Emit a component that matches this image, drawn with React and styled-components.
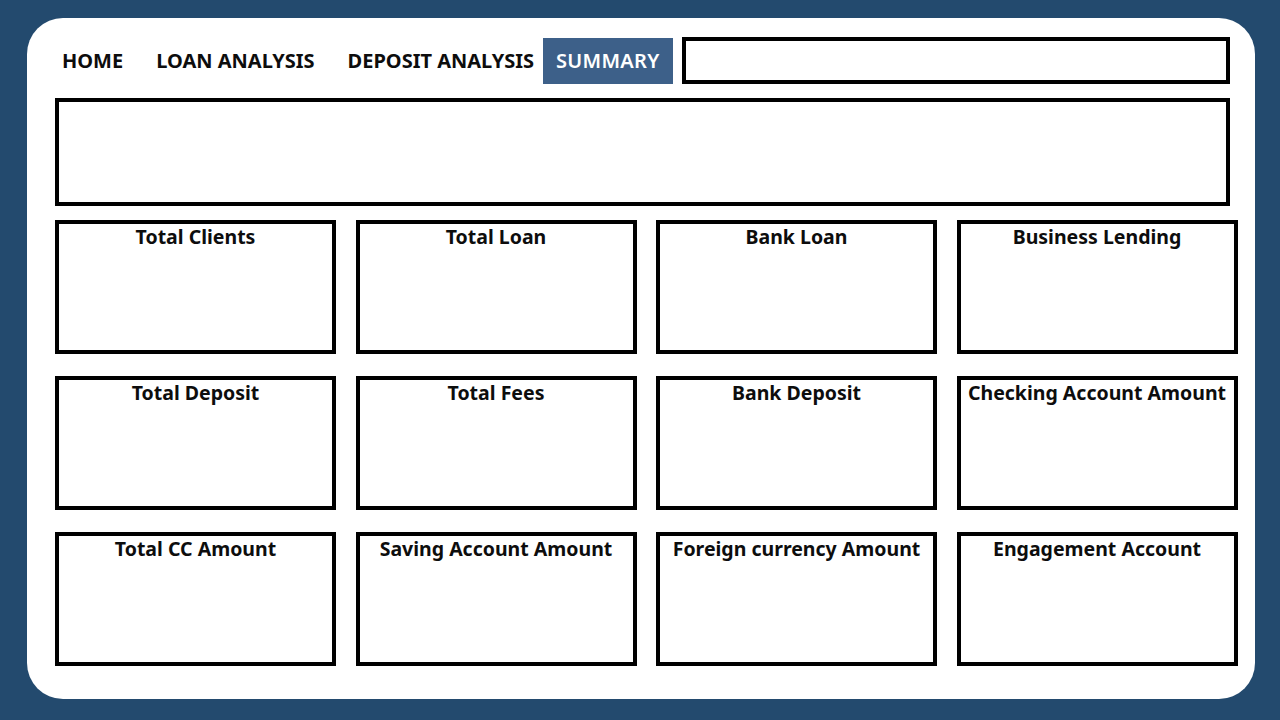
import React from "react";
import styled, { createGlobalStyle } from "styled-components";

const Global = createGlobalStyle`
  html, body {
    margin: 0;
    padding: 0;
    background: #234a6e;
    font-family: "Noto Sans", "Open Sans", "Liberation Sans", sans-serif;
  }
`;

const Page = styled.div`
  width: 1280px;
  height: 720px;
  box-sizing: border-box;
  padding: 18px 25px 21px 27px;
  background: #234a6e;
`;

const Sheet = styled.div`
  height: 100%;
  box-sizing: border-box;
  background: #ffffff;
  border-radius: 36px;
  padding: 19px 25px 0 28px;
`;

const Header = styled.div`
  display: flex;
  align-items: center;
  gap: 9px;
  height: 47px;
`;

const Nav = styled.nav`
  display: flex;
  align-items: center;
  gap: 33px;
  padding-left: 7px;
`;

const NavLink = styled.div`
  font-size: 20px;
  font-weight: 700;
  color: #0d0d0d;
  white-space: nowrap;
`;

const Tab = styled.div`
  display: flex;
  align-items: center;
  height: 46px;
  padding: 0 13px;
  background: #3d6089;
  color: #ffffff;
  font-size: 20px;
  font-weight: 600;
  letter-spacing: 0.3px;
  white-space: nowrap;
`;

const Search = styled.div`
  flex: 1;
  height: 47px;
  box-sizing: border-box;
  border: 4px solid #000;
`;

const Banner = styled.div`
  height: 108px;
  margin-top: 14px;
  box-sizing: border-box;
  border: 4px solid #000;
`;

const Grid = styled.div`
  display: grid;
  grid-template-columns: repeat(4, 281px);
  grid-auto-rows: 134px;
  column-gap: 19.5px;
  row-gap: 22px;
  margin-top: 14px;
`;

const Tile = styled.div`
  box-sizing: border-box;
  border: 4px solid #000;
  padding-top: 1px;
  text-align: center;
`;

const TileTitle = styled.div`
  font-size: 19.5px;
  font-weight: 700;
  color: #0d0d0d;
  line-height: 24px;
  white-space: nowrap;
`;

const tiles = [
  "Total Clients",
  "Total Loan",
  "Bank Loan",
  "Business Lending",
  "Total Deposit",
  "Total Fees",
  "Bank Deposit",
  "Checking Account Amount",
  "Total CC Amount",
  "Saving Account Amount",
  "Foreign currency Amount",
  "Engagement Account",
];

export default function App() {
  return (
    <>
      <Global />
      <Page>
        <Sheet>
          <Header>
            <Nav>
              <NavLink>HOME</NavLink>
              <NavLink>LOAN ANALYSIS</NavLink>
              <NavLink>DEPOSIT ANALYSIS</NavLink>
            </Nav>
            <Tab>SUMMARY</Tab>
            <Search />
          </Header>
          <Banner />
          <Grid>
            {tiles.map((label) => (
              <Tile key={label}>
                <TileTitle>{label}</TileTitle>
              </Tile>
            ))}
          </Grid>
        </Sheet>
      </Page>
    </>
  );
}
